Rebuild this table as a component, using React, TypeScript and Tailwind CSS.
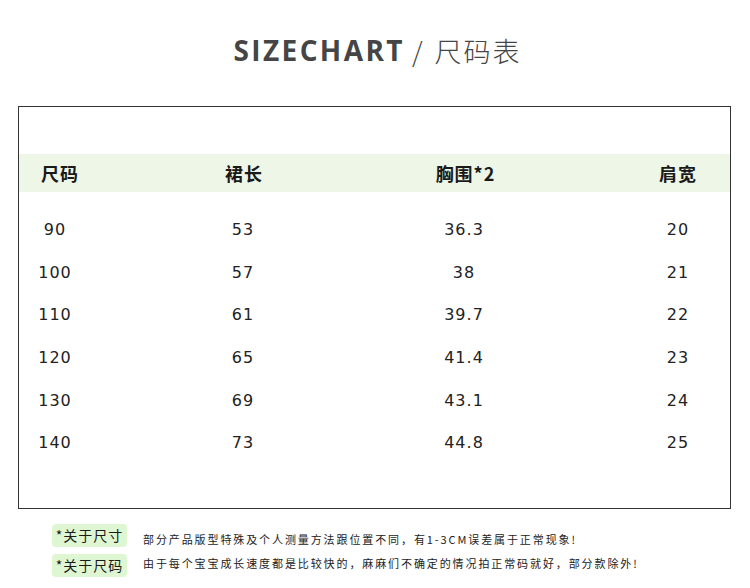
const rows = [
  ['90', '53', '36.3', '20'],
  ['100', '57', '38', '21'],
  ['110', '61', '39.7', '22'],
  ['120', '65', '41.4', '23'],
  ['130', '69', '43.1', '24'],
  ['140', '73', '44.8', '25'],
];

const cjk = "font-['Noto_Sans_CJK_SC',sans-serif]";

export default function App() {
  return (
    <div className="w-[750px] h-[588px] bg-white overflow-hidden relative">
      {/* title */}
      <div className="flex items-center justify-center pt-[24px] pl-[5px] h-[76px] text-[#454545]">
        <span className="font-['Open_Sans',sans-serif] font-bold text-[28px] tracking-[2.4px] leading-none">SIZECHART</span>
        <span className={`ml-[7px] text-[27px] leading-none ${cjk} font-light`}>/</span>
        <span className={`ml-[12px] text-[27px] leading-none ${cjk} font-light tracking-[2px]`}>尺码表</span>
      </div>

      {/* table box */}
      <div className="ml-[18px] mt-[30px] w-[713px] h-[403px] border border-[#333]">
        <div className="h-[47px]" />
        <div className={`flex items-center h-[38px] bg-[#eef6e8] text-[18px] font-bold text-[#1a1a1a] ${cjk}`}>
          <div className="w-[72px] pl-[22px] whitespace-nowrap tracking-[1px]">尺码</div>
          <div className="w-[80px] ml-[112px] text-center tracking-[1px] pl-[2px]">裙长</div>
          <div className="w-[80px] ml-[141px] text-center tracking-[1px] pl-[3px]">胸围*2</div>
          <div className="w-[80px] ml-[134px] text-center tracking-[1px]">肩宽</div>
        </div>
        <div className="pt-[17px] font-['DejaVu_Sans',sans-serif] text-[16px] text-[#222] tracking-[1px]">
          {rows.map((r) => (
            <div key={r[0]} className="flex items-center h-[42.6px]">
              <div className="w-[72px] text-center">{r[0]}</div>
              <div className="w-[80px] ml-[112px] text-center">{r[1]}</div>
              <div className="w-[80px] ml-[141px] text-center">{r[2]}</div>
              <div className="w-[80px] ml-[134px] text-center">{r[3]}</div>
            </div>
          ))}
        </div>
      </div>

      {/* notes */}
      <div className={`mt-[14px] ml-[52px] flex flex-col gap-[6px] ${cjk}`}>
        <div className="flex items-center">
          <div className="w-[75px] h-[23px] rounded-[4px] bg-[#def6d2] flex items-center justify-center text-[14px] text-[#1a1a1a] tracking-[1px]">*关于尺寸</div>
          <div className="ml-[16px] mt-[8px] text-[11px] text-[#222] tracking-[1.9px] whitespace-nowrap">部分产品版型特殊及个人测量方法跟位置不同，有1-3CM误差属于正常现象!</div>
        </div>
        <div className="flex items-center">
          <div className="w-[75px] h-[23px] rounded-[4px] bg-[#def6d2] flex items-center justify-center text-[14px] text-[#1a1a1a] tracking-[1px]">*关于尺码</div>
          <div className="ml-[16px] -mt-[4px] text-[11px] text-[#222] tracking-[1.9px] whitespace-nowrap">由于每个宝宝成长速度都是比较快的，麻麻们不确定的情况拍正常码就好，部分款除外!</div>
        </div>
      </div>
    </div>
  );
}
